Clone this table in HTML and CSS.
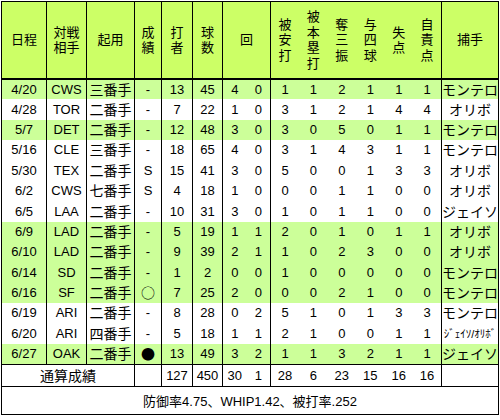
FILE: index.html
```html
<!DOCTYPE html>
<html lang="ja">
<head>
<meta charset="utf-8">
<title>登板成績</title>
<link rel="stylesheet" href="styles.css">
</head>
<body>
<table class="stats">
  <colgroup>
    <col class="w-date sep"><col class="w-opp sep"><col class="w-role sep"><col class="w-res sep"><col class="w-bf sep"><col class="w-np sep"><col class="w-ip"><col class="w-ip sep"><col class="w-st"><col class="w-st"><col class="w-st"><col class="w-st"><col class="w-st"><col class="w-st sep"><col class="w-c">
  </colgroup>
  <thead>
    <tr class="head">
      <th>日程</th>
      <th>対戦<br>相手</th>
      <th>起用</th>
      <th>成<br>績</th>
      <th>打<br>者</th>
      <th>球<br>数</th>
      <th colspan="2">回</th>
      <th>被<br>安<br>打</th>
      <th>被<br>本<br>塁<br>打</th>
      <th>奪<br>三<br>振</th>
      <th>与<br>四<br>球</th>
      <th>失<br>点</th>
      <th>自<br>責<br>点</th>
      <th>捕手</th>
    </tr>
  </thead>
  <tbody>
    <tr class="g"><td>4/20</td><td>CWS</td><td>三番手</td><td>-</td><td>13</td><td>45</td><td>4</td><td>0</td><td>1</td><td>1</td><td>2</td><td>1</td><td>1</td><td>1</td><td>モンテロ</td></tr>
    <tr><td>4/28</td><td>TOR</td><td>二番手</td><td>-</td><td>7</td><td>22</td><td>1</td><td>0</td><td>3</td><td>1</td><td>2</td><td>1</td><td>4</td><td>4</td><td>オリボ</td></tr>
    <tr class="g"><td>5/7</td><td>DET</td><td>二番手</td><td>-</td><td>12</td><td>48</td><td>3</td><td>0</td><td>3</td><td>0</td><td>5</td><td>0</td><td>1</td><td>1</td><td>モンテロ</td></tr>
    <tr><td>5/16</td><td>CLE</td><td>三番手</td><td>-</td><td>18</td><td>65</td><td>4</td><td>0</td><td>3</td><td>1</td><td>4</td><td>3</td><td>1</td><td>1</td><td>モンテロ</td></tr>
    <tr><td>5/30</td><td>TEX</td><td>二番手</td><td>S</td><td>15</td><td>41</td><td>3</td><td>0</td><td>5</td><td>0</td><td>0</td><td>1</td><td>3</td><td>3</td><td>オリボ</td></tr>
    <tr><td>6/2</td><td>CWS</td><td>七番手</td><td>S</td><td>4</td><td>18</td><td>1</td><td>0</td><td>0</td><td>0</td><td>1</td><td>1</td><td>0</td><td>0</td><td>オリボ</td></tr>
    <tr><td>6/5</td><td>LAA</td><td>二番手</td><td>-</td><td>10</td><td>31</td><td>3</td><td>0</td><td>1</td><td>0</td><td>1</td><td>1</td><td>0</td><td>0</td><td>ジェイソ</td></tr>
    <tr class="g"><td>6/9</td><td>LAD</td><td>二番手</td><td>-</td><td>5</td><td>19</td><td>1</td><td>1</td><td>2</td><td>0</td><td>1</td><td>0</td><td>1</td><td>1</td><td>オリボ</td></tr>
    <tr class="g"><td>6/10</td><td>LAD</td><td>二番手</td><td>-</td><td>9</td><td>39</td><td>2</td><td>1</td><td>1</td><td>0</td><td>2</td><td>3</td><td>0</td><td>0</td><td>オリボ</td></tr>
    <tr class="g"><td>6/14</td><td>SD</td><td>二番手</td><td>-</td><td>1</td><td>2</td><td>0</td><td>0</td><td>1</td><td>0</td><td>0</td><td>0</td><td>0</td><td>0</td><td>モンテロ</td></tr>
    <tr class="g"><td>6/16</td><td>SF</td><td>二番手</td><td><span class="mark">○</span></td><td>7</td><td>25</td><td>2</td><td>0</td><td>0</td><td>0</td><td>2</td><td>1</td><td>0</td><td>0</td><td>モンテロ</td></tr>
    <tr><td>6/19</td><td>ARI</td><td>二番手</td><td>-</td><td>8</td><td>28</td><td>0</td><td>2</td><td>5</td><td>1</td><td>0</td><td>1</td><td>3</td><td>3</td><td>モンテロ</td></tr>
    <tr><td>6/20</td><td>ARI</td><td>四番手</td><td>-</td><td>5</td><td>18</td><td>1</td><td>1</td><td>2</td><td>1</td><td>0</td><td>0</td><td>1</td><td>1</td><td><span class="small">ｼﾞｪｲｿ/ｵﾘﾎﾞ</span></td></tr>
    <tr class="g"><td>6/27</td><td>OAK</td><td>二番手</td><td><span class="mark">●</span></td><td>13</td><td>49</td><td>3</td><td>2</td><td>1</td><td>1</td><td>3</td><td>2</td><td>1</td><td>1</td><td>ジェイソ</td></tr>
  </tbody>
  <tfoot>
    <tr class="total"><td colspan="3" class="jp">通算成績</td><td></td><td>127</td><td>450</td><td>30</td><td>1</td><td>28</td><td>6</td><td>23</td><td>15</td><td>16</td><td>16</td><td></td></tr>
    <tr class="foot"><td colspan="15">防御率4.75、WHIP1.42、被打率.252</td></tr>
  </tfoot>
</table>
</body>
</html>
```

FILE: styles.css
```css
body {
  margin: 0;
  background: #ffffff;
}

.stats {
  border-collapse: collapse;
  table-layout: fixed;
  width: 497px;
  margin: 1px 0 0 1px;
  border: 1px solid #000;
  font-family: "Liberation Sans", "Noto Sans CJK JP", sans-serif;
  font-size: 13px;
  color: #000;
}

.stats col.sep { border-right: 1px solid #000; }
.w-date { width: 45px; }
.w-opp { width: 40px; }
.w-role { width: 48px; }
.w-res { width: 27px; }
.w-bf { width: 31px; }
.w-np { width: 30px; }
.w-ip { width: 24px; }
.w-st { width: 28.5px; }
.w-c { width: 57px; }

.stats th,
.stats td {
  padding: 0;
  text-align: center;
  font-weight: normal;
  white-space: nowrap;
}

.head th {
  background: #ccff66;
  height: 76px;
  line-height: 15.5px;
  vertical-align: middle;
  border-bottom: 2px solid #000;
}

tbody tr { height: 20.4px; }
tbody td { line-height: 16px; }
tbody td:nth-child(3),
tbody td:nth-child(15),
.jp { font-size: 14px; }

.g td { background: #ccff99; }

.mark {
  font-family: "Noto Sans CJK JP", sans-serif;
  font-size: 14px;
  line-height: 16px;
}
.small { font-size: 11px; }

.total td {
  height: 21px;
  border-top: 1px solid #000;
}

.foot td {
  height: 27px;
  border-top: 1px solid #000;
}
```
